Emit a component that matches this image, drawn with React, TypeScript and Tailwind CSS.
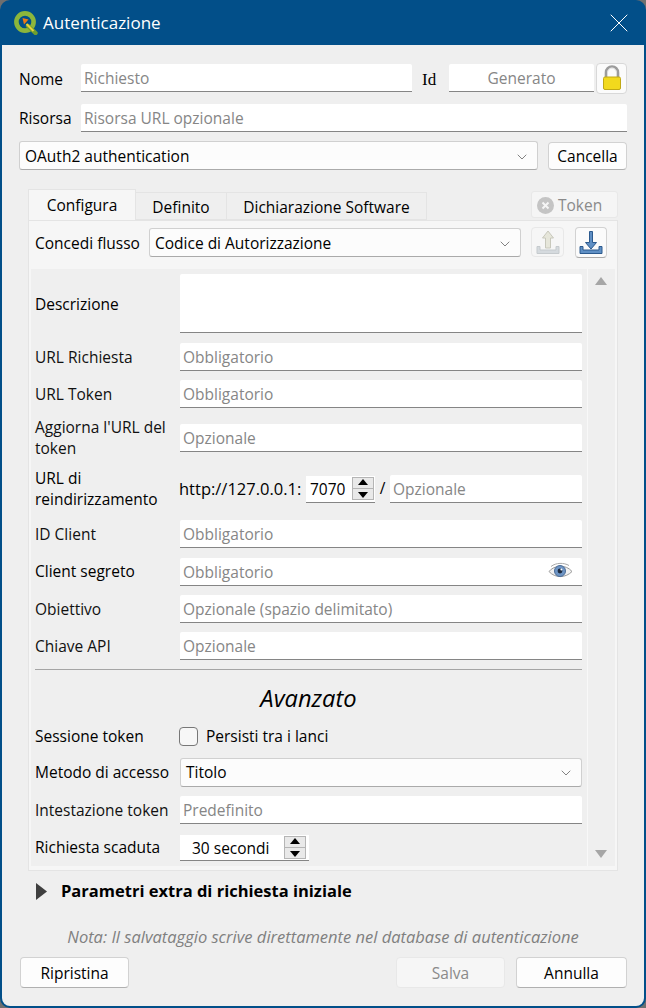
import React from 'react';
import { ChevronDown, X } from 'lucide-react';

const font = "font-['Open_Sans','Noto_Sans',sans-serif]";

function Field({ placeholder, className = '' }: { placeholder?: string; className?: string }) {
    return (
        <div className={`flex h-[28px] items-center bg-white border-b-[1.5px] border-[#858585] rounded-t-[2px] px-[3px] pt-[2px] text-[#868686] ${className}`}>
            {placeholder}
        </div>
    );
}

function Combo({ value, className = '' }: { value: string; className?: string }) {
    return (
        <div className={`flex h-[29px] items-center justify-between bg-[#fcfcfc] border border-[#d0d0d0] border-b-[#aaaaaa] rounded-[3px] pl-[5px] pr-[7px] text-black ${className}`}>
            <span>{value}</span>
            <ChevronDown size={16} strokeWidth={1} className="text-[#444]" />
        </div>
    );
}

function Button({ label, disabled, className = '' }: { label: string; disabled?: boolean; className?: string }) {
    return (
        <div className={`flex items-center justify-center rounded-[4px] border pt-[2px] ${disabled ? 'bg-[#f6f6f6] border-[#e8e8e8] text-[#8a8a8a]' : 'bg-[#fdfdfd] border-[#d2d2d2] border-b-[#b0b0b0] text-black'} ${className}`}>
            {label}
        </div>
    );
}

function Spin() {
    return (
        <div className="flex flex-col w-[22px] h-[23px] border border-[#b5b5b5] bg-[#e9e9e9] items-center justify-around shrink-0">
            <svg width="10" height="6" viewBox="0 0 10 6"><path d="M5 0 10 6H0z" fill="#000" /></svg>
            <div className="h-px w-full bg-[#b5b5b5]" />
            <svg width="10" height="6" viewBox="0 0 10 6"><path d="M0 0h10L5 6z" fill="#000" /></svg>
        </div>
    );
}

function Row({ label, placeholder, className = '' }: { label: string; placeholder: string; className?: string }) {
    return (
        <div className={`flex items-center ${className}`}>
            <div className="w-[145px] shrink-0 leading-[21px] text-[#111]">{label}</div>
            <Field placeholder={placeholder} className="w-[402px]" />
        </div>
    );
}

function QgisLogo() {
    return (
        <svg width="24" height="24" viewBox="0 0 24 24">
            <circle cx="11" cy="11" r="8.6" fill="none" stroke="#8cb63c" strokeWidth="4.6" />
            <path d="M14 15 21.5 22" stroke="#6f9e2e" strokeWidth="4.4" strokeLinecap="round" />
            <path d="M12.5 13 19.5 20" stroke="#e9d23a" strokeWidth="2" />
            <path d="M8.5 7 14.5 8.5 10 13.5z" fill="#ee7913" />
        </svg>
    );
}

function LockIcon() {
    return (
        <svg width="20" height="26" viewBox="0 0 20 26">
            <path d="M4 12V7.5a6 6 0 0 1 12 0V12" fill="none" stroke="#9c9c9c" strokeWidth="2.6" />
            <path d="M5.5 12V7.5a4.5 4.5 0 0 1 9 0V12" fill="none" stroke="#dcdcdc" strokeWidth="1" />
            <rect x="1.5" y="12" width="17" height="12.5" rx="1.5" fill="#f2d91d" stroke="#c0a815" />
        </svg>
    );
}

function UploadIcon() {
    return (
        <svg width="24" height="24" viewBox="0 0 24 24">
            <path d="M12 1 17.5 8H14.5V18H9.5V8H6.5z" fill="#e6e6da" stroke="#c8c8bc" />
            <path d="M1 16.5H4V20H20V16.5H23V23.5H1z" fill="#d5dade" stroke="#c5cacd" />
        </svg>
    );
}

function DownloadIcon() {
    return (
        <svg width="24" height="24" viewBox="0 0 24 24">
            <path d="M12 19 6.5 12.5H10.5V1.5H13.5V12.5H17.5z" fill="#5f8fc4" stroke="#2c5a8e" />
            <path d="M1 16.5H4V20H20V16.5H23V23.5H1z" fill="#5f8fc4" stroke="#2c5a8e" />
        </svg>
    );
}

function EyeIcon() {
    return (
        <svg width="25" height="17" viewBox="0 0 25 17">
            <path d="M1 9.5C6 3 18 2 24 9.5 18 16 7 16.5 1 9.5z" fill="#f1f1f1" stroke="#999" />
            <path d="M3 4.5C8 0.5 16 0.5 21 3.5" fill="none" stroke="#aaa" />
            <circle cx="12" cy="9" r="5.5" fill="#6d94c4" stroke="#4a6c98" />
            <circle cx="12" cy="9" r="2.4" fill="#1d2b40" />
            <circle cx="13.4" cy="7.6" r="1" fill="#fff" />
        </svg>
    );
}

export default function App() {
    return (
        <div className={`${font} w-[646px] h-[1008px] bg-[#6f6f6f] text-[15.5px] text-black overflow-hidden`}>
            <div className="flex flex-col w-full h-full bg-[#024f89] rounded-[10px] px-[2px] pb-[2px]">
                {/* Title bar */}
                <div className="flex h-[45px] shrink-0 items-center justify-between pl-[12px] pr-[9px] text-white text-[17px]">
                    <div className="flex items-center gap-[5px]">
                        <QgisLogo />
                        <span>Autenticazione</span>
                    </div>
                    <X size={32} strokeWidth={0.75} />
                </div>

                {/* Body */}
                <div className="flex flex-1 flex-col bg-[#efefef] rounded-b-[8px] pl-[17px] pr-[17px]">
                    <div className="flex items-center mt-[18px] h-[30px]">
                        <div className="w-[62px] pt-[3px]">Nome</div>
                        <Field placeholder="Richiesto" className="w-[331px]" />
                        <div className="w-[37px] pl-[10px] pt-[3px] font-['Liberation_Serif',serif] text-[17px]">Id</div>
                        <Field placeholder="Generato" className="w-[145px] justify-center" />
                        <div className="flex w-[31px] h-[31px] ml-[2px] items-center justify-center bg-[#fbfbfb] border border-[#d8d8d8] rounded-[4px]">
                            <LockIcon />
                        </div>
                    </div>
                    <div className="flex items-center mt-[11px]">
                        <div className="w-[62px] pt-[2px]">Risorsa</div>
                        <Field placeholder="Risorsa URL opzionale" className="w-[546px]" />
                    </div>
                    <div className="flex items-center mt-[9px]">
                        <Combo value="OAuth2 authentication" className="w-[519px] pt-[2px]" />
                        <Button label="Cancella" className="w-[79px] h-[28px] ml-[10px]" />
                    </div>

                    {/* Tabs */}
                    <div className="flex items-end ml-[9px] mt-[19px] h-[31px]">
                        <div className="flex w-[108px] h-[31px] items-center justify-center bg-[#f6f6f6] border border-b-0 border-[#e4e4e4] pt-[2px]">Configura</div>
                        <div className="flex w-[91px] h-[28px] items-center justify-center border border-l-0 border-[#e4e4e4] pt-[3px]">Definito</div>
                        <div className="flex w-[200px] h-[28px] items-center justify-center border border-l-0 border-[#e4e4e4] pt-[3px]">Dichiarazione Software</div>
                        <div className="flex w-[87px] h-[27px] ml-[104px] mb-[2px] items-center pl-[5px] pt-[2px] gap-[4px] bg-[#f5f5f5] border border-[#e8e8e8] rounded-[3px] text-[#8a8a8a]">
                            <svg width="17" height="17" viewBox="0 0 17 17">
                                <circle cx="8.5" cy="8.5" r="8.5" fill="#c4c4c4" />
                                <path d="M5.5 5.5l6 6M11.5 5.5l-6 6" stroke="#f5f5f5" strokeWidth="2" />
                            </svg>
                            Token
                        </div>
                    </div>

                    {/* Tab pane */}
                    <div className="ml-[9px] w-[590px] h-[651px] bg-[#f6f6f6] border border-[#e4e4e4] px-[2px] flex flex-col">
                        <div className="flex items-center h-[30px] mt-[6px] pl-[4px]">
                            <div className="w-[114px] pt-[3px]">Concedi flusso</div>
                            <Combo value="Codice di Autorizzazione" className="w-[372px] pt-[3px]" />
                            <div className="flex w-[33px] h-[30px] ml-[10px] items-center justify-center bg-[#f6f6f6] border border-[#e8e8e8] rounded-[4px]">
                                <UploadIcon />
                            </div>
                            <div className="flex w-[32px] h-[31px] ml-[11px] items-center justify-center bg-[#fbfbfb] border border-[#d2d2d2] border-b-[#aaa] rounded-[4px]">
                                <DownloadIcon />
                            </div>
                        </div>

                        {/* Scroll area */}
                        <div className="flex flex-1 mt-[12px] mb-[4px] bg-[#efefef]">
                            <div className="flex flex-col w-[556px] pl-[4px] pr-[5px] pt-[5px]">
                                <div className="flex items-center">
                                    <div className="w-[145px] shrink-0 pt-[2px]">Descrizione</div>
                                    <Field className="w-[402px] h-[59px]" />
                                </div>
                                <Row label="URL Richiesta" placeholder="Obbligatorio" className="mt-[10px]" />
                                <Row label="URL Token" placeholder="Obbligatorio" className="mt-[9px]" />
                                <Row label="Aggiorna l'URL del token" placeholder="Opzionale" className="mt-[9px]" />
                                <div className="flex items-center mt-[9px]">
                                    <div className="w-[144px] shrink-0 leading-[21px]">URL di reindirizzamento</div>
                                    <div className="w-[127px] shrink-0 text-[16.5px]">http://127.0.0.1:</div>
                                    <div className="flex h-[27px] w-[69px] items-center justify-between bg-white border-b border-[#858585] pl-[4px] pr-[1px] shrink-0">
                                        <span className="pt-[2px]">7070</span>
                                        <Spin />
                                    </div>
                                    <div className="w-[15px] text-center">/</div>
                                    <Field placeholder="Opzionale" className="w-[192px]" />
                                </div>
                                <Row label="ID Client" placeholder="Obbligatorio" className="mt-[10px]" />
                                <div className="flex items-center mt-[10px]">
                                    <div className="w-[145px] shrink-0">Client segreto</div>
                                    <div className="relative">
                                        <Field placeholder="Obbligatorio" className="w-[402px]" />
                                        <div className="absolute right-[9px] top-[4px]"><EyeIcon /></div>
                                    </div>
                                </div>
                                <Row label="Obiettivo" placeholder="Opzionale (spazio delimitato)" className="mt-[9px]" />
                                <Row label="Chiave API" placeholder="Opzionale" className="mt-[9px]" />
                                <div className="h-px bg-[#a5a5a5] mt-[9px]" />
                                <div className="text-center text-[23.7px] italic mt-[10px] leading-[36px]">Avanzato</div>
                                <div className="flex items-center mt-[8px] h-[24px]">
                                    <div className="w-[144px] shrink-0 pt-[2px]">Sessione token</div>
                                    <div className="w-[19px] h-[19px] bg-[#f7f7f7] border border-[#777] rounded-[4px]" />
                                    <div className="ml-[8px] pt-[2px]">Persisti tra i lanci</div>
                                </div>
                                <div className="flex items-center mt-[10px]">
                                    <div className="w-[145px] shrink-0">Metodo di accesso</div>
                                    <Combo value="Titolo" className="w-[403px] h-[28px]" />
                                </div>
                                <Row label="Intestazione token" placeholder="Predefinito" className="mt-[9px]" />
                                <div className="flex items-center mt-[11px]">
                                    <div className="w-[145px] shrink-0">Richiesta scaduta</div>
                                    <div className="flex h-[26px] w-[129px] items-center justify-between bg-white border-b border-[#858585] pl-[12px] pr-[3px]">
                                        <span className="pt-[2px]">30 secondi</span>
                                        <Spin />
                                    </div>
                                </div>
                            </div>
                            <div className="flex flex-col flex-1 items-center justify-between border-l border-[#f8f8f8] py-[8px] pr-[2px]">
                                <svg width="12" height="8" viewBox="0 0 12 8"><path d="M6 0 12 8H0z" fill="#a6a6a6" /></svg>
                                <svg width="12" height="8" viewBox="0 0 12 8"><path d="M0 0h12L6 8z" fill="#a6a6a6" /></svg>
                            </div>
                        </div>
                    </div>

                    <div className="flex items-center ml-[17px] mt-[11px] h-[18px] gap-[14px] text-[16.5px] font-bold">
                        <svg width="11" height="17" viewBox="0 0 11 17"><path d="M0 0 11 8.5 0 17z" fill="#3f3f3f" /></svg>
                        Parametri extra di richiesta iniziale
                    </div>
                    <div className="text-center italic text-[#808080] mt-[27px] text-[16.5px] leading-[20px]">Nota: Il salvataggio scrive direttamente nel database di autenticazione</div>
                    <div className="flex items-center mt-[10px]">
                        <Button label="Ripristina" className="w-[109px] h-[31px] ml-[1px]" />
                        <Button label="Salva" disabled className="w-[109px] h-[31px] ml-[267px]" />
                        <Button label="Annulla" className="w-[111px] h-[31px] ml-[11px]" />
                    </div>
                </div>
            </div>
        </div>
    );
}
